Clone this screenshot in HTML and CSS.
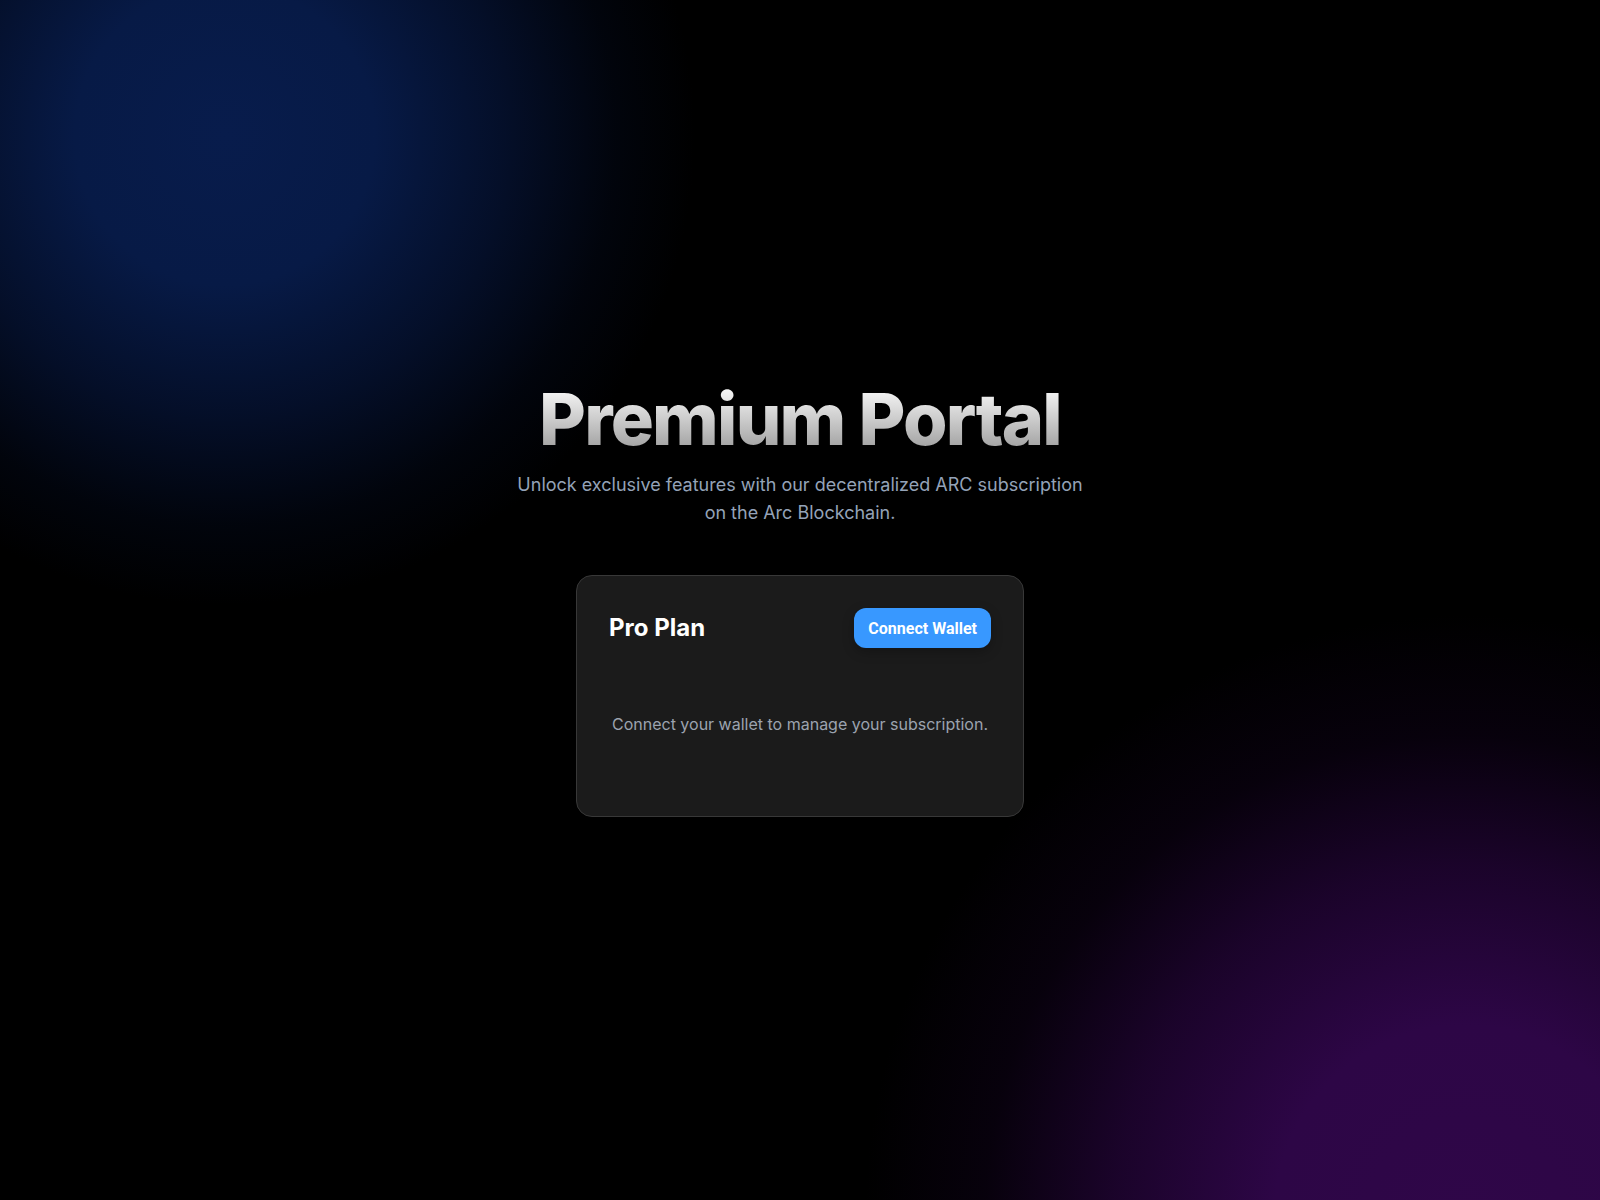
FILE: index.html
```html
<!DOCTYPE html>
<html lang="en">
<head>
<meta charset="utf-8">
<title>Premium Portal</title>
<link rel="stylesheet" href="styles.css">
</head>
<body>
<main class="page">
  <section class="hero">
    <h1 class="title">Premium Portal</h1>
    <p class="subtitle">Unlock exclusive features with our decentralized ARC subscription on the Arc Blockchain.</p>
    <div class="card">
      <div class="card-head">
        <h2 class="plan">Pro Plan</h2>
        <button class="connect" type="button">Connect Wallet</button>
      </div>
      <p class="card-note">Connect your wallet to manage your subscription.</p>
    </div>
  </section>
</main>
</body>
</html>
```

FILE: styles.css
```css
* { box-sizing: border-box; }

html, body {
  margin: 0;
  height: 100%;
}

body {
  font-family: Inter, "Noto Sans", sans-serif;
  color: #fff;
  background:
    radial-gradient(circle 470px at 225px 135px,
      rgb(8, 28, 76) 0,
      rgb(7, 26, 70) 150px,
      rgba(6, 21, 58, 0.7) 280px,
      rgba(4, 14, 40, 0.3) 390px,
      rgba(0, 0, 0, 0) 100%),
    radial-gradient(circle 600px at 1465px 1215px,
      rgb(47, 6, 72) 0,
      rgb(45, 6, 70) 190px,
      rgba(38, 5, 60, 0.7) 350px,
      rgba(24, 3, 40, 0.3) 480px,
      rgba(0, 0, 0, 0) 100%),
    #000;
}

.page {
  min-height: 100vh;
  display: flex;
  align-items: center;
  justify-content: center;
}

.hero {
  display: flex;
  flex-direction: column;
  align-items: center;
  text-align: center;
}

.title {
  margin: 0 0 16px;
  font-size: 72px;
  line-height: 1;
  font-weight: 800;
  letter-spacing: -0.025em;
  background: linear-gradient(to bottom, #ffffff, #999999);
  -webkit-background-clip: text;
  background-clip: text;
  color: transparent;
}

.subtitle {
  margin: 0 0 48px;
  max-width: 576px;
  font-size: 18px;
  line-height: 28px;
  color: #94a3b8;
}

.card {
  width: 448px;
  padding: 32px;
  background: #1b1b1b;
  border: 1px solid #383838;
  border-radius: 16px;
}

.card-head {
  display: flex;
  align-items: center;
  justify-content: space-between;
}

.plan {
  margin: 0;
  font-size: 24px;
  line-height: 32px;
  font-weight: 700;
  color: #fff;
}

.connect {
  height: 40px;
  padding: 0 14px;
  border: none;
  border-radius: 12px;
  background: #3898ff;
  color: #fff;
  font-family: Roboto, "Liberation Sans", sans-serif;
  font-size: 16px;
  font-weight: 700;
  box-shadow: 0 4px 12px rgba(0, 0, 0, 0.25);
  cursor: pointer;
}

.card-note {
  margin: 24px 0 0;
  padding: 40px 0 48px;
  font-size: 16px;
  line-height: 24px;
  color: #9ca3af;
}
```
